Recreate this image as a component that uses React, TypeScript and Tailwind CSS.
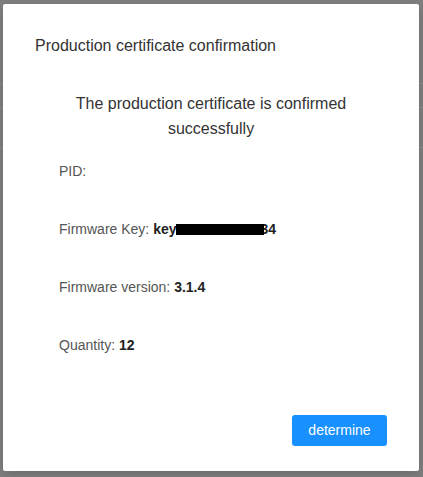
export default function App() {
  return (
    <div
      className="relative h-[477px] w-[423px] overflow-hidden bg-[#7f7f7f] pl-[3px] pt-[4px]"
      style={{ fontFamily: '"Liberation Sans", Arial, sans-serif' }}
    >
      {/* faint rows of the page behind the mask */}
      <div className="absolute left-0 right-0 top-[83px] h-px bg-[#8c8c8c]" />
      <div className="absolute left-0 right-0 top-[107px] h-px bg-[#8c8c8c]" />
      <div className="absolute left-0 right-0 top-[147px] h-px bg-[#8c8c8c]" />

      <div className="relative flex h-[467px] w-[416px] flex-col rounded-[2px] bg-white px-8 pt-[30px] shadow-[0_4px_12px_rgba(0,0,0,0.15)]">
        <h2 className="text-[16px] leading-[24px] text-[#333]">Production certificate confirmation</h2>

        <p className="mt-[33px] text-center text-[16px] leading-[25px] text-[#333]">
          The production certificate is confirmed
          <br />
          successfully
        </p>

        <div className="mt-[20px] flex flex-col gap-[38px] pl-6 text-[14px] leading-[20px] text-[#555]">
          <div>PID:</div>
          <div>
            Firmware Key:{' '}
            <span className="font-bold text-[#222]">
              key
              <span className="relative z-10 -mr-[4px] inline-block h-[11px] w-[88px] bg-black align-[-1px]" />
              34
            </span>
          </div>
          <div>
            Firmware version: <span className="font-bold text-[#222]">3.1.4</span>
          </div>
          <div>
            Quantity: <span className="font-bold text-[#222]">12</span>
          </div>
        </div>

        <div className="mt-auto flex justify-end pb-[25px]">
          <button className="h-[31px] w-[95px] rounded-[3px] bg-[#1890ff] text-[14px] text-white">
            determine
          </button>
        </div>
      </div>
    </div>
  )
}
